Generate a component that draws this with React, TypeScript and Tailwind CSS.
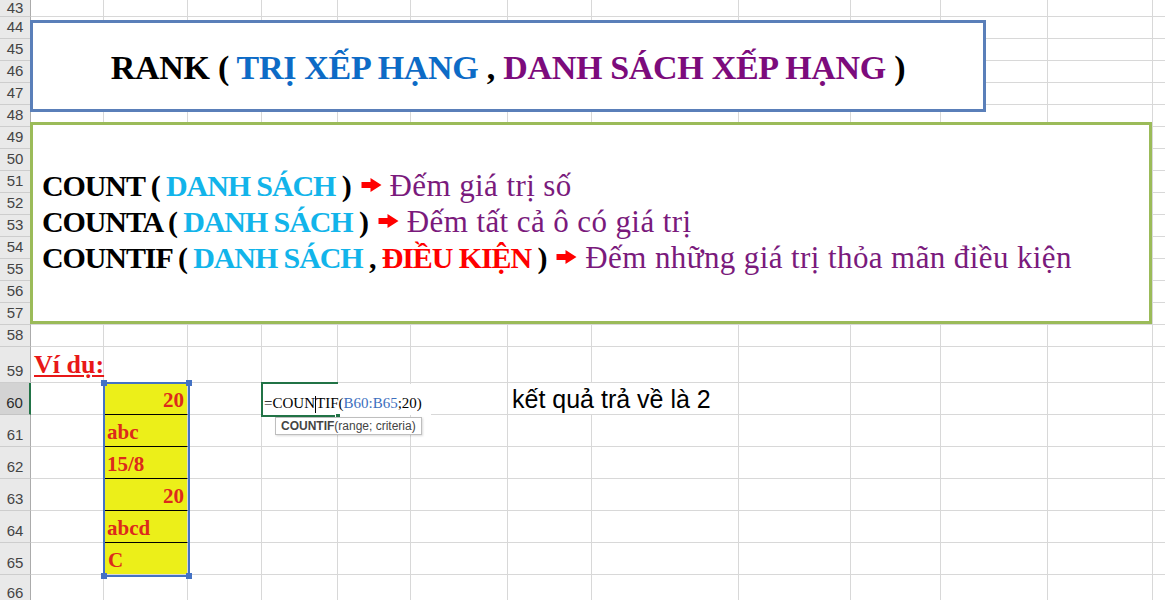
import { Fragment } from "react";

const COLS = [73, 84, 74, 76, 73, 97, 84, 147, 112, 90, 107, 105, 40];
const ROWS = Array.from({ length: 24 }, (_, i) => 43 + i);

const bCells: Record<number, { text: string; right?: boolean }> = {
  60: { text: "20", right: true },
  61: { text: "abc" },
  62: { text: "15/8" },
  63: { text: "20", right: true },
  64: { text: "abcd" },
  65: { text: "C" },
};

function Arrow() {
  return (
    <svg viewBox="0 0 20 14" className="inline-block w-[21px] h-[14px] ml-[10px] mr-[8px] align-[4px]">
      <path d="M0 4h9V0l11 7-11 7v-4H0z" fill="#ff0000" />
    </svg>
  );
}

function RowHeader({ n }: { n: number }) {
  if (n === 60) {
    return (
      <div className="flex items-end justify-center pb-[3px] bg-[#d3d3d3] border-b border-b-[#c4c4c4] border-r-2 border-r-[#217346] text-[#2b2b2b] text-[15px] leading-[17px] font-['Liberation_Sans',sans-serif]">
        {n}
      </div>
    );
  }
  if (n === 43) {
    return (
      <div className="flex items-start justify-center bg-[#e9e9e9] border-b border-b-[#cdcdcd] border-r border-r-[#ababab] text-[#444] text-[15px] leading-[15px] font-['Liberation_Sans',sans-serif]">
        {n}
      </div>
    );
  }
  return (
    <div className="flex items-end justify-center pb-[3px] bg-[#e9e9e9] border-b border-b-[#cdcdcd] border-r border-r-[#ababab] text-[#444] text-[15px] leading-[17px] font-['Liberation_Sans',sans-serif]">
      {n}
    </div>
  );
}

function Cell({ row, col }: { row: number; col: number }) {
  if (col === 1 && bCells[row]) {
    const cell = bCells[row];
    const last = row === 65;
    return (
      <div
        className={
          cell.right
            ? "flex items-end justify-end pr-[3px] pb-[2px] bg-[#ecef19] border-r border-r-[#d8d8d8] border-b border-b-black font-['Liberation_Serif',serif] font-bold text-[21px] leading-[24px] text-[#dc2a1c]"
            : last
              ? "flex items-end pl-[4px] pb-[2px] bg-[#ecef19] border-r border-r-[#d8d8d8] border-b border-b-[#d8d8d8] font-['Liberation_Serif',serif] font-bold text-[21px] leading-[24px] text-[#dc2a1c]"
              : "flex items-end pl-[3px] pb-[2px] bg-[#ecef19] border-r border-r-[#d8d8d8] border-b border-b-black font-['Liberation_Serif',serif] font-bold text-[21px] leading-[24px] text-[#dc2a1c]"
        }
      >
        {cell.text}
      </div>
    );
  }
  if (row === 59 && col === 0) {
    return (
      <div className="flex items-end pl-[3px] pb-[2px] border-r border-b border-[#d8d8d8] whitespace-nowrap font-['Liberation_Serif',serif] font-bold text-[26px] leading-[30px] text-[#e81818] underline decoration-2 underline-offset-[2px]">
        Ví dụ:
      </div>
    );
  }
  if (row === 60 && col === 6) {
    return (
      <div className="flex items-end pl-[4px] border-b border-[#d8d8d8] whitespace-nowrap font-['Liberation_Sans',sans-serif] text-[25px] leading-[29px] text-black">
        kết quả trả về là 2
      </div>
    );
  }
  return <div className="border-r border-b border-[#d8d8d8]" />;
}

function Bold({ color, children }: { color: string; children: string }) {
  return (
    <span
      className={
        color === "cyan"
          ? "font-bold text-[30px] tracking-[-1.1px] text-[#12b4ea]"
          : color === "red"
            ? "font-bold text-[30px] tracking-[-1.1px] text-[#ff0000]"
            : "font-bold text-[30px] tracking-[-1.1px] text-black"
      }
    >
      {children}
    </span>
  );
}

function Desc({ children }: { children: string }) {
  return <span className="text-[31px] tracking-[0.4px] text-[#7a1a7c]">{children}</span>;
}

export default function App() {
  return (
    <div className="relative w-[1165px] h-[600px] overflow-hidden bg-white">
      <div className="grid grid-cols-[31px_73px_84px_74px_76px_73px_97px_84px_147px_112px_90px_107px_105px_40px] grid-rows-[17px_repeat(15,22px)_36px_repeat(6,32px)_30px]">
        {ROWS.map((r) => (
          <Fragment key={r}>
            <RowHeader n={r} />
            {COLS.map((_, c) => (
              <Cell key={c} row={r} col={c} />
            ))}
          </Fragment>
        ))}
      </div>

      {/* title shape */}
      <div className="absolute left-[30px] top-[20px] w-[956px] h-[92px] border-[3px] border-[#5a7fb9] bg-white flex items-center justify-center pt-[4px]">
        <p className="font-['Liberation_Serif',serif] font-bold text-[34px] tracking-[-0.3px] leading-none whitespace-nowrap text-black">
          RANK ( <span className="text-[#0d6bc6]">TRỊ XẾP HẠNG</span> , <span className="text-[#7c0b7c]">DANH SÁCH XẾP HẠNG</span> )
        </p>
      </div>

      {/* count functions shape */}
      <div className="absolute left-[30px] top-[122px] w-[1122px] h-[202px] border-[3px] border-[#9bbb59] bg-white pl-[9px] pt-[43px] font-['Liberation_Serif',serif] text-[31px] leading-[36px] whitespace-nowrap">
        <div>
          <Bold color="black">COUNT ( </Bold>
          <Bold color="cyan">DANH SÁCH</Bold>
          <Bold color="black"> )</Bold>
          <Arrow />
          <Desc>Đếm giá trị số</Desc>
        </div>
        <div>
          <Bold color="black">COUNTA ( </Bold>
          <Bold color="cyan">DANH SÁCH</Bold>
          <Bold color="black"> )</Bold>
          <Arrow />
          <Desc>Đếm tất cả ô có giá trị</Desc>
        </div>
        <div>
          <Bold color="black">COUNTIF ( </Bold>
          <Bold color="cyan">DANH SÁCH</Bold>
          <Bold color="black"> , </Bold>
          <Bold color="red">ĐIỀU KIỆN</Bold>
          <Bold color="black"> )</Bold>
          <Arrow />
          <Desc>Đếm những giá trị thỏa mãn điều kiện</Desc>
        </div>
      </div>

      {/* range reference highlight B60:B65 */}
      <div className="absolute left-[103px] top-[382px] w-[87px] h-[195px] border-2 border-[#4472c4]">
        <div className="absolute -left-[4px] -top-[4px] w-[6px] h-[6px] bg-[#4472c4]" />
        <div className="absolute -right-[4px] -top-[4px] w-[6px] h-[6px] bg-[#4472c4]" />
        <div className="absolute -left-[4px] -bottom-[4px] w-[6px] h-[6px] bg-[#4472c4]" />
        <div className="absolute -right-[4px] -bottom-[4px] w-[6px] h-[6px] bg-[#4472c4]" />
      </div>

      {/* cell editor D60 */}
      <div className="absolute left-[263px] top-[384px] w-[168px] h-[31px] bg-white flex items-end pb-[2px] pl-[1px] font-['Liberation_Serif',serif] text-[15px] leading-[18px] text-black whitespace-nowrap">
        <span>
          =COUN
          <span className="inline-block w-px h-[17px] bg-black align-[-5px]" />
          TIF(<span className="text-[#3c6fbe]">B60:B65</span>;20)
        </span>
      </div>
      <div className="absolute left-[261px] top-[382px] w-[77px] h-[35px] border-2 border-r-0 border-[#217346]">
        <div className="absolute -right-[3px] -bottom-[4px] w-[6px] h-[6px] bg-[#217346] border border-white" />
      </div>

      {/* function tooltip */}
      <div className="absolute left-[275px] top-[417px] h-[18px] border border-[#bebebe] bg-white px-[5px] shadow-[1px_1px_2px_rgba(0,0,0,0.15)] font-['Liberation_Sans',sans-serif] text-[12px] leading-[16px] text-[#444] whitespace-nowrap">
        <span className="font-bold">COUNTIF</span>(range; criteria)
      </div>
    </div>
  );
}
